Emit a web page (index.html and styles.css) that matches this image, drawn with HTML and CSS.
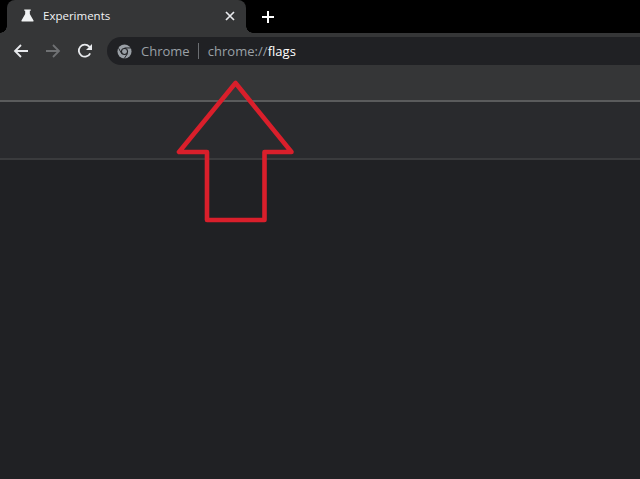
FILE: index.html
```html
<!DOCTYPE html>
<html lang="en">
<head>
<meta charset="utf-8">
<title>Experiments</title>
<link rel="stylesheet" href="styles.css">
</head>
<body>
<div class="window">
  <div class="tabstrip">
    <div class="tab">
      <svg class="flask" viewBox="0 0 14 14"><path d="M3.500 0.500h7v1.500H9.500V5.500L13.500 12.300Q14 13.500 12.800 13.500H1.200Q0 13.500 0.500 12.300L4.500 5.500V2H3.500z" fill="#f1f3f4"/></svg>
      <span class="tab-title">Experiments</span>
      <svg class="tab-close" viewBox="0 0 10 10"><path d="M1 1l8 8M9 1l-8 8" stroke="#e8eaed" stroke-width="1.700" fill="none"/></svg>
    </div>
    <svg class="new-tab" viewBox="0 0 12 12"><path d="M6 0v12M0 6h12" stroke="#fff" stroke-width="2" fill="none"/></svg>
  </div>
  <div class="toolbar">
    <div class="nav">
      <svg class="nav-icon" viewBox="0 0 16 16"><path d="M15 8H2M8 2L2 8l6 6" stroke="#e8eaed" stroke-width="1.800" fill="none"/></svg>
      <svg class="nav-icon" viewBox="0 0 16 16"><path d="M1 8h13M8 2l6 6-6 6" stroke="#6f7173" stroke-width="1.800" fill="none"/></svg>
      <svg class="nav-icon" viewBox="0 0 16 16"><path d="M13.200 10.300A6 6 0 1 1 12.300 3.700L14 5.500" stroke="#e8eaed" stroke-width="1.800" fill="none"/><path d="M15 1v6H9z" fill="#e8eaed"/></svg>
    </div>
    <div class="omnibox">
      <svg class="chrome-icon" viewBox="0 0 16 16"><circle cx="8" cy="8" r="7.500" fill="#9aa0a6"/><circle cx="8" cy="8" r="3.800" fill="#202124"/><circle cx="8" cy="8" r="2.600" fill="#9aa0a6"/><path d="M8 4.200h6.800M5 10.400L1.700 4.500M11.200 10.200l-3.600 5.500" stroke="#202124" stroke-width="1"/></svg>
      <span class="origin">Chrome</span>
      <span class="sep"></span>
      <span class="url"><span class="url-dim">chrome://</span>flags</span>
    </div>
  </div>
  <div class="bookmarks"></div>
  <div class="subheader"></div>
  <div class="page"></div>
  <svg class="callout" viewBox="0 0 640 479"><path d="M235.500 83L179 152H207V220H264.500V152H291.500z" fill="none" stroke="#d91f2b" stroke-width="4.600" stroke-linejoin="round"/></svg>
</div>
</body>
</html>
```
FILE: styles.css
```css
html, body {
  margin: 0;
  padding: 0;
  height: 100%;
  background: #202124;
  overflow: hidden;
}
.window {
  position: relative;
  width: 640px;
  height: 479px;
  display: flex;
  flex-direction: column;
  font-family: "Open Sans", "Noto Sans", sans-serif;
}
.tabstrip {
  height: 33px;
  flex: none;
  background: #000;
  display: flex;
  align-items: center;
  padding-left: 7px;
  box-sizing: border-box;
}
.tab {
  position: relative;
  width: 239px;
  height: 33px;
  box-sizing: border-box;
  background: #353637;
  border-radius: 8px 8px 0 0;
  display: flex;
  align-items: center;
  padding: 0 11px 2px 14px;
}
.tab::before,
.tab::after {
  content: "";
  position: absolute;
  bottom: 0;
  width: 7px;
  height: 7px;
}
.tab::before {
  left: -7px;
  background: radial-gradient(circle at 0 0, #000 6.500px, #353637 7px);
}
.tab::after {
  right: -7px;
  background: radial-gradient(circle at 100% 0, #000 6.500px, #353637 7px);
}
.flask {
  width: 13px;
  height: 13px;
  flex: none;
}
.tab-title {
  margin-left: 9px;
  flex: 1;
  color: #f1f3f4;
  font-size: 11.500px;
}
.tab-close {
  width: 10px;
  height: 10px;
  flex: none;
}
.new-tab {
  width: 12px;
  height: 12px;
  margin-left: 16px;
}
.toolbar {
  height: 32px;
  flex: none;
  background: #353637;
  display: flex;
  align-items: flex-start;
  padding-top: 4px;
  box-sizing: border-box;
}
.nav {
  width: 107px;
  height: 28px;
  flex: none;
  display: flex;
  align-items: center;
  gap: 16px;
  padding-left: 13px;
  box-sizing: border-box;
}
.nav-icon {
  width: 16px;
  height: 16px;
  flex: none;
}
.omnibox {
  flex: 1;
  height: 28px;
  background: #202124;
  border-radius: 14px 0 0 14px;
  display: flex;
  align-items: center;
  padding-left: 10px;
}
.chrome-icon {
  width: 15px;
  height: 15px;
  flex: none;
}
.origin {
  margin-left: 9px;
  color: #9aa0a6;
  font-size: 13px;
}
.sep {
  width: 1px;
  height: 16px;
  background: #6b6e72;
  margin: 0 9px 0 8px;
}
.url {
  color: #fff;
  font-size: 13px;
  letter-spacing: 0.040px;
}
.url-dim {
  color: #9aa0a6;
}
.bookmarks {
  height: 37px;
  flex: none;
  box-sizing: border-box;
  background: #353637;
  border-bottom: 2px solid #5a5b5c;
}
.subheader {
  height: 58px;
  flex: none;
  box-sizing: border-box;
  background: #292a2d;
  border-bottom: 2px solid #3a3b3d;
}
.page {
  flex: 1;
  background: #202124;
}
.callout {
  position: absolute;
  left: 0;
  top: 0;
  width: 640px;
  height: 479px;
}
```
